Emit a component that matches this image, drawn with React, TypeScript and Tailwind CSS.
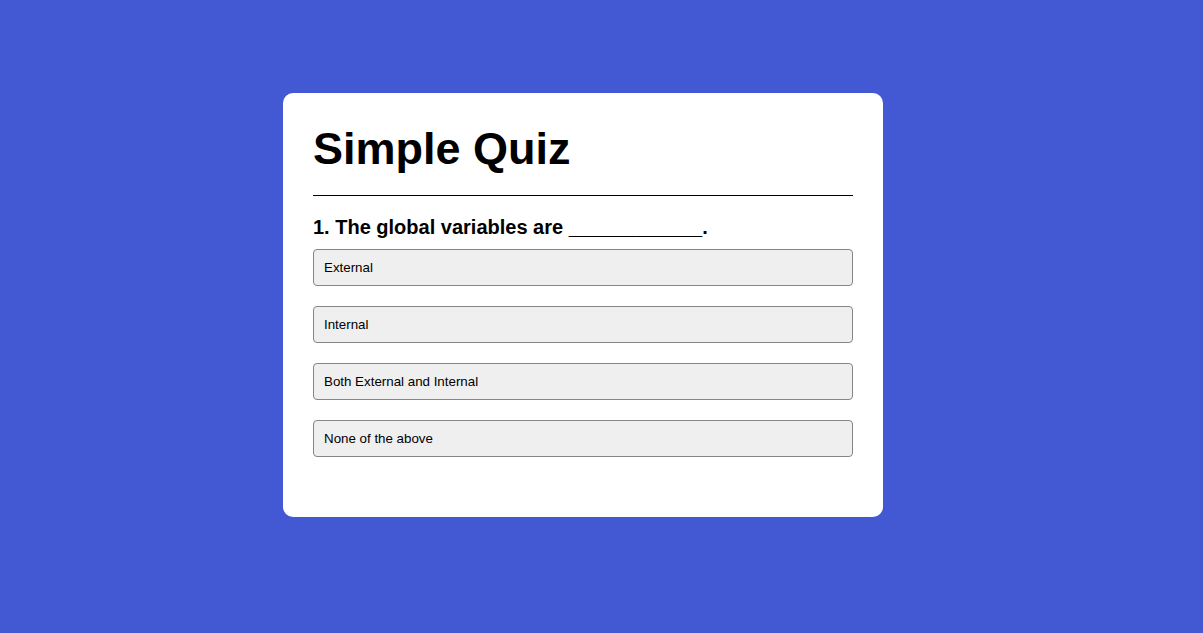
const options = ['External', 'Internal', 'Both External and Internal', 'None of the above'];

export default function App() {
  return (
    <div className="min-h-screen bg-[#4359d3] pt-[93px] font-['Liberation_Sans',Arial,sans-serif]">
      <div className="ml-[283px] w-[600px] rounded-[10px] bg-white px-[30px] pt-[32px] pb-[40px]">
        <h1 className="text-[45px] font-bold leading-[48px] text-black">Simple Quiz</h1>
        <hr className="mt-[22px] border-t border-black" />
        <h2 className="mt-[19px] text-[20px] font-bold leading-[24px] text-black">
          1. The global variables are ____________.
        </h2>
        <div className="mt-[10px] flex flex-col">
          {options.map((opt) => (
            <button
              key={opt}
              className="mb-[20px] h-[37px] w-full rounded-[4px] border border-[#858585] bg-[#efefef] px-[10px] text-left text-[13.33px] text-black"
            >
              {opt}
            </button>
          ))}
        </div>
      </div>
    </div>
  );
}
